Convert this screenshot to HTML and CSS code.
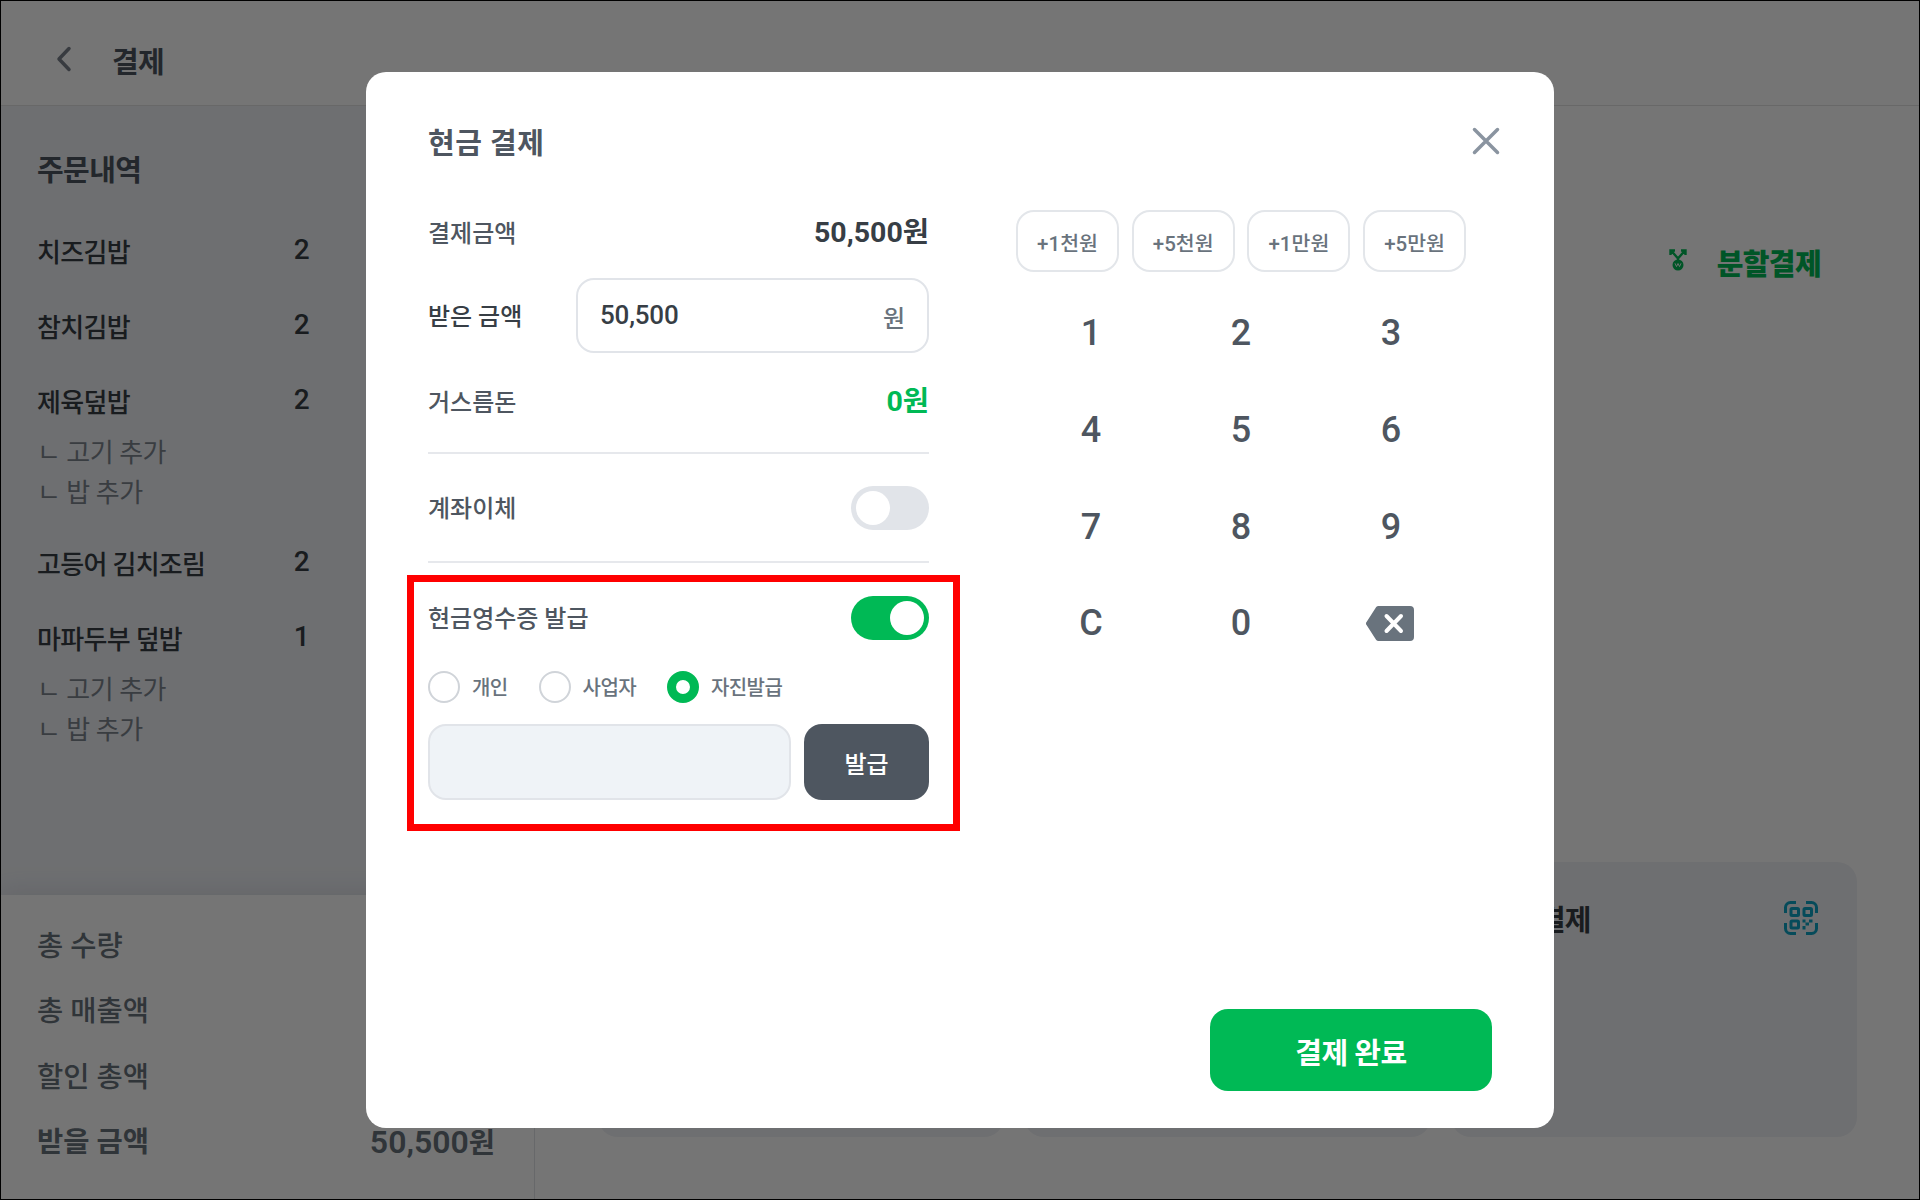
FILE: index.html
```html
<!DOCTYPE html>
<html lang="ko">
<head>
    <meta charset="UTF-8">
    <meta name="viewport" content="width=device-width, initial-scale=1.0">
    <title>현금 결제</title>
    <link rel="stylesheet" href="styles.css">
</head>
<body>
    <div class="screen">
        <!-- Header -->
        <header class="header">
            <svg class="back" width="16" height="28" viewBox="0 0 16 28"><path d="M13 3.500L3 14l10 10.500"/></svg>
            <h1>결제</h1>
        </header>

        <div class="main">
            <!-- Order list -->
            <aside class="sidebar">
                <div class="orders">
                    <h2>주문내역</h2>
                    <div class="order"><span>치즈김밥</span><b>2</b></div>
                    <div class="order"><span>참치김밥</span><b>2</b></div>
                    <div class="order"><span>제육덮밥</span><b>2</b></div>
                    <div class="options">
                        <p>ㄴ 고기 추가</p>
                        <p>ㄴ 밥 추가</p>
                    </div>
                    <div class="order"><span>고등어 김치조림</span><b>2</b></div>
                    <div class="order"><span>마파두부 덮밥</span><b>1</b></div>
                    <div class="options">
                        <p>ㄴ 고기 추가</p>
                        <p>ㄴ 밥 추가</p>
                    </div>
                </div>
                <div class="totals">
                    <div class="total"><span>총 수량</span></div>
                    <div class="total"><span>총 매출액</span></div>
                    <div class="total"><span>할인 총액</span></div>
                    <div class="total due"><span>받을 금액</span><span><span class="num">50,500</span>원</span></div>
                </div>
            </aside>

            <!-- Payment methods -->
            <section class="content">
                <div class="split">
                    <svg width="18" height="22" viewBox="0 0 18 22">
                        <path d="M1.500 6V1.500H6M16.500 6V1.500H12M2.500 2L9 9.500 15.500 2M9 9v4" fill="none" stroke="#00b955" stroke-width="2.400"/>
                        <circle cx="9" cy="16" r="5.500" fill="#00b955"/>
                        <path d="M6 14.300l1.500 3.300L9 14.500l1.500 3.100 1.500-3.300" fill="none" stroke="#fff" stroke-width="0.900"/>
                    </svg>
                    <span>분할결제</span>
                </div>
                <div class="cards">
                    <div class="card"></div>
                    <div class="card"></div>
                    <div class="card">
                        <span>간편결제</span>
                        <svg width="34" height="34" viewBox="0 0 34 34">
                            <g fill="none" stroke="#0fa3c4" stroke-width="3">
                                <path d="M1.500 12V6.500a5 5 0 0 1 5-5H12M22 1.500h5.500a5 5 0 0 1 5 5V12M32.500 22v5.500a5 5 0 0 1-5 5H22M12 32.500H6.500a5 5 0 0 1-5-5V22"/>
                                <rect x="7" y="7.500" width="7.500" height="7" rx="1"/>
                                <rect x="20" y="7.500" width="7.500" height="7" rx="1"/>
                                <rect x="7" y="20" width="7.500" height="7" rx="1"/>
                            </g>
                            <path d="M18.500 18.500h3v3h-3zM25 18.500h3.500v3H25zM21.500 21.500H25v3h-3.500zM18.500 25h3v3.500h-3z" fill="#0fa3c4"/>
                        </svg>
                    </div>
                </div>
            </section>
        </div>
    </div>

    <!-- Cash payment modal -->
    <div class="overlay">
        <div class="modal">
            <div class="modal-head">
                <h2>현금 결제</h2>
                <svg width="28" height="28" viewBox="0 0 28 28"><path d="M2.500 2.500l23 23M25.500 2.500l-23 23"/></svg>
            </div>

            <div class="modal-body">
                <div class="form">
                    <div class="row amount"><span>결제금액</span><strong>50,500원</strong></div>
                    <div class="row received">
                        <span>받은 금액</span>
                        <div class="field"><span class="value">50,500</span><span class="unit">원</span></div>
                    </div>
                    <div class="row change"><span>거스름돈</span><strong>0원</strong></div>
                    <div class="row transfer"><span>계좌이체</span><i class="toggle"></i></div>

                    <div class="receipt">
                        <div class="row"><span>현금영수증 발급</span><i class="toggle on"></i></div>
                        <div class="radios">
                            <label><i class="radio"></i>개인</label>
                            <label><i class="radio"></i>사업자</label>
                            <label><i class="radio checked"></i>자진발급</label>
                        </div>
                        <div class="issue">
                            <div class="number"></div>
                            <button class="issue-btn">발급</button>
                        </div>
                    </div>
                </div>

                <div class="pad">
                    <div class="quick">
                        <button>+1천원</button>
                        <button>+5천원</button>
                        <button>+1만원</button>
                        <button>+5만원</button>
                    </div>
                    <div class="keys">
                        <span>1</span><span>2</span><span>3</span>
                        <span>4</span><span>5</span><span>6</span>
                        <span>7</span><span>8</span><span>9</span>
                        <span>C</span><span>0</span>
                        <span>
                            <svg width="48" height="35" viewBox="0 0 48 35">
                                <path d="M12.500 0H44a4 4 0 0 1 4 4v27a4 4 0 0 1-4 4H12.500a3 3 0 0 1-2.300-1.100L.4 18.800a2 2 0 0 1 0-2.600L10.200 1.100A3 3 0 0 1 12.500 0z" fill="#69737d"/>
                                <path d="M20.500 10l14.500 15M35 10L20.500 25" stroke="#fff" stroke-width="4" stroke-linecap="round"/>
                            </svg>
                        </span>
                    </div>
                </div>
            </div>

            <button class="done">결제 완료</button>
        </div>
    </div>
</body>
</html>
```
FILE: styles.css
```css
* {
    box-sizing: border-box;
}

body {
    margin: 0;
    width: 1920px;
    height: 1200px;
    overflow: hidden;
    font-family: Roboto, "Noto Sans CJK KR", sans-serif;
    color: #4e5660;
}

h1, h2, p {
    margin: 0;
    font-size: 29px;
    line-height: 40px;
}

button {
    font-family: inherit;
    padding: 0;
    border: none;
}

i {
    display: block;
}

/* Page behind the modal */
.screen {
    display: flex;
    flex-direction: column;
    height: 1200px;
    background: #fff;
}

.header {
    display: flex;
    align-items: center;
    height: 106px;
    padding: 20px 0 0 56px;
    border-bottom: 1px solid #e3e3e3;
}

.header h1 {
    margin-left: 40px;
    letter-spacing: -0.7px;
}

.back {
    margin-top: -8px;
    fill: none;
    stroke: #7a828c;
    stroke-width: 3.500;
    stroke-linecap: round;
    stroke-linejoin: round;
}

.main {
    display: flex;
    flex: 1;
}

.sidebar {
    display: flex;
    flex-direction: column;
    width: 535px;
    border-right: 1px solid #e1e3e7;
}

.orders {
    height: 789px;
    padding: 45px 37px 0;
    background: #f0f2f6;
}

.orders h2 {
    margin-bottom: 24px;
    letter-spacing: -0.6px;
}

.order {
    display: flex;
    justify-content: space-between;
    width: 272px;
    height: 75px;
    padding-top: 18px;
    font-size: 26px;
    font-weight: 500;
    line-height: 40px;
    letter-spacing: -0.7px;
    color: #373e45;
}

.order b {
    margin-top: -3px;
    font-size: 28px;
    font-weight: 500;
}

.options {
    height: 94px;
    margin-top: -7px;
}

.options p {
    font-size: 26px;
    letter-spacing: -0.5px;
    color: #7d858f;
}

.totals {
    flex: 1;
    padding: 19px 39px 0 37px;
    background: #fff;
    box-shadow: 0 -4px 24px rgba(90, 100, 130, 0.15);
    clip-path: inset(-40px 0 0 0);
}

.total {
    display: flex;
    justify-content: space-between;
    height: 65.300px;
    font-size: 28.500px;
    font-weight: 500;
    line-height: 65px;
    color: #69737d;
}

.due {
    font-weight: 700;
}

.due .num {
    font-size: 32px;
    font-weight: 600;
}

.content {
    display: flex;
    flex: 1;
    flex-direction: column;
    justify-content: space-between;
    padding: 139px 63px 63px;
}

.split {
    display: flex;
    align-items: center;
    justify-content: flex-end;
    gap: 30px;
    padding-right: 36px;
    font-size: 29px;
    font-weight: 900;
    line-height: 40px;
    letter-spacing: -0.6px;
    color: #00b955;
}

.split svg {
    margin-top: -10px;
}

.cards {
    display: flex;
    gap: 20px;
}

.card {
    display: flex;
    flex: 1;
    justify-content: space-between;
    height: 275px;
    padding: 39px 39px 0 37px;
    border-radius: 20px;
    background: #f0f2f6;
    font-size: 29px;
    font-weight: 700;
    line-height: 40px;
    letter-spacing: -1px;
    color: #373e45;
}

/* Modal */
.overlay {
    position: absolute;
    inset: 0;
    padding: 71px 0 0 365px;
    border: 1px solid #000;
    background: rgba(0, 0, 0, 0.54);
}

.modal {
    display: flex;
    flex-direction: column;
    width: 1188px;
    height: 1056px;
    padding: 52px 62px 37px;
    border-radius: 20px;
    background: #fff;
}

.modal-head {
    display: flex;
    justify-content: space-between;
}

.modal-head h2 {
    letter-spacing: 0.5px;
}

.modal-head svg {
    margin: 3px -8px 0 0;
    fill: none;
    stroke: #8a94a0;
    stroke-width: 3.500;
    stroke-linecap: round;
}

.modal-body {
    display: flex;
    flex: 1;
    gap: 87px;
}

.form {
    width: 501px;
    padding-top: 44px;
}

.row {
    display: flex;
    align-items: center;
    justify-content: space-between;
    font-size: 24px;
    font-weight: 500;
    line-height: 40px;
}

.row > span {
    padding-top: 2px;
}

.row strong {
    font-size: 28.500px;
}

.amount {
    height: 50px;
}

.amount strong {
    color: #373e45;
}

.received {
    height: 115px;
    color: #373e45;
}

.field {
    display: flex;
    justify-content: space-between;
    width: 353px;
    height: 75px;
    padding: 15px 22px;
    border: 2px solid #e1e4e9;
    border-radius: 18px;
}

.value {
    font-size: 26px;
    letter-spacing: -0.2px;
}

.unit {
    padding-top: 4px;
    color: #69737d;
}

.change {
    height: 81px;
    padding-bottom: 22px;
    border-bottom: 2px solid #e6e8ec;
}

.change strong {
    color: #00b955;
}

.transfer {
    height: 109px;
    border-bottom: 2px solid #e6e8ec;
}

.toggle {
    width: 78px;
    height: 44px;
    padding: 5px;
    border-radius: 22px;
    background: #e1e4e9;
}

.toggle::before {
    content: "";
    display: block;
    width: 34px;
    height: 34px;
    border-radius: 50%;
    background: #fff;
}

.toggle.on {
    background: #00b955;
}

.toggle.on::before {
    margin-left: auto;
}

.receipt {
    width: 553px;
    height: 256px;
    margin: 12px 0 0 -21px;
    padding: 14px 24px 0 14px;
    border: 7px solid #ff0000;
}

.radios {
    display: flex;
    gap: 31px;
    margin-top: 31px;
    font-size: 20px;
    font-weight: 500;
    line-height: 34px;
    letter-spacing: -0.600px;
    color: #69737d;
}

.radios label {
    display: flex;
    gap: 12px;
    height: 32px;
}

.radio {
    width: 32px;
    height: 32px;
    border: 2px solid #d0d4d9;
    border-radius: 50%;
}

.radio.checked {
    border: 9px solid #00b955;
}

.issue {
    display: flex;
    gap: 13px;
    margin-top: 21px;
}

.number {
    width: 363px;
    height: 76px;
    border: 2px solid #e1e4e9;
    border-radius: 18px;
    background: #eff3f7;
}

.issue-btn {
    width: 125px;
    height: 76px;
    padding-top: 1px;
    border-radius: 18px;
    background: #4e5660;
    color: #fff;
    font-size: 24px;
    font-weight: 500;
}

.pad {
    padding-top: 46px;
}

.quick {
    display: flex;
    gap: 12.700px;
}

.quick button {
    width: 103px;
    height: 62px;
    padding-top: 2px;
    border: 2px solid #e3e6ea;
    border-radius: 18px;
    background: #fff;
    color: #69737d;
    font-size: 20.500px;
    font-weight: 500;
}

.keys {
    display: grid;
    grid-template-columns: repeat(3, 150px);
    grid-auto-rows: 96.700px;
    margin-top: 13px;
}

.keys span {
    display: flex;
    align-items: center;
    justify-content: center;
    font-size: 36px;
    font-weight: 500;
}

.keys svg {
    margin-left: -2px;
}

.done {
    align-self: flex-end;
    width: 282px;
    height: 82px;
    padding-top: 1px;
    border-radius: 18px;
    background: #00b955;
    color: #fff;
    font-size: 29px;
    font-weight: 700;
    letter-spacing: -0.500px;
}
```
